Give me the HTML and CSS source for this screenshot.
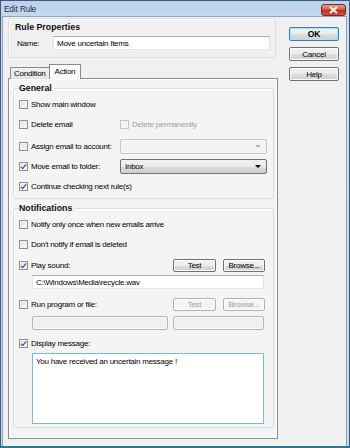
FILE: index.html
```html
<!DOCTYPE html>
<html lang="en">
<head>
    <meta charset="UTF-8">
    <title>Edit Rule</title>
    <link rel="stylesheet" href="styles.css">
</head>
<body>
    <div class="window">
        <div class="titlebar">
            <span class="title">Edit Rule</span>
            <span class="close-btn">
                <svg width="9" height="8" viewBox="0 0 9 8"><path d="M1 1 L8 7 M8 1 L1 7" stroke="#fff" stroke-width="1.8"/></svg>
            </span>
        </div>
        <div class="client">
            <div class="left">
                <div class="props">
                    <div class="props-title">Rule Properties</div>
                    <div class="name-row">
                        <span class="name-label">Name:</span>
                        <div class="textbox name-box">Move uncertain Items</div>
                    </div>
                </div>

                <div class="tabs">
                    <div class="tab">Condition</div>
                    <div class="tab active">Action</div>
                </div>

                <div class="panel">
                    <div class="group general">
                        <div class="legend">General</div>
                        <div class="row"><span class="check"></span><span class="label">Show main window</span></div>
                        <div class="row">
                            <span class="check"></span><span class="label col1">Delete email</span>
                            <span class="check disabled"></span><span class="label muted">Delete permanently</span>
                        </div>
                        <div class="row gap2">
                            <span class="check"></span><span class="label col1">Assign email to account:</span>
                            <div class="combo disabled"><span class="arrow"></span></div>
                        </div>
                        <div class="row">
                            <span class="check on"></span><span class="label col1">Move email to folder:</span>
                            <div class="combo">Inbox<span class="arrow"></span></div>
                        </div>
                        <div class="row"><span class="check on"></span><span class="label">Continue checking next rule(s)</span></div>
                    </div>

                    <div class="group notif">
                        <div class="legend">Notifications</div>
                        <div class="row"><span class="check"></span><span class="label">Notify only once when new emails arrive</span></div>
                        <div class="row"><span class="check"></span><span class="label">Don't notify if email is deleted</span></div>
                        <div class="row short">
                            <span class="check on"></span><span class="label grow">Play sound:</span>
                            <span class="btn small">Test</span><span class="btn small browse">Browse...</span>
                        </div>
                        <div class="textbox path">C:\Windows\Media\recycle.wav</div>
                        <div class="row short run">
                            <span class="check"></span><span class="label grow">Run program or file:</span>
                            <span class="btn small disabled">Test</span><span class="btn small browse disabled">Browse...</span>
                        </div>
                        <div class="split">
                            <div class="textbox disabled wide"></div>
                            <div class="textbox disabled narrow"></div>
                        </div>
                        <div class="row short display">
                            <span class="check on"></span><span class="label">Display message:</span>
                        </div>
                        <div class="textbox message">You have received an uncertain message !</div>
                    </div>
                </div>
            </div>

            <div class="buttons">
                <span class="btn big default">OK</span>
                <span class="btn big">Cancel</span>
                <span class="btn big">Help</span>
            </div>
        </div>
    </div>
</body>
</html>
```

FILE: styles.css
```css
* { box-sizing: border-box; }
html, body { margin: 0; padding: 0; }
body { font-family: "Liberation Sans", Arial, sans-serif; font-size: 8px; letter-spacing: -0.25px; color: #000; background: #fff; }

.window {
    width: 350px;
    height: 448px;
    display: flex;
    flex-direction: column;
    background: linear-gradient(#bcd1ec, #cfdff2 30px, #c4d8ee);
    border: 1px solid #3f5a78;
    border-bottom: 2px solid #1c7f96;
}
.titlebar { height: 15px; display: flex; align-items: center; justify-content: space-between; padding: 0 3px 0 3px; }
.title { font-size: 8.2px; letter-spacing: -0.1px; color: #1e2b3a; padding-top: 1px; }
.close-btn {
    width: 25px;
    height: 12px;
    margin-top: 2px;
    border: 1px solid #7a2a20;
    border-radius: 3px;
    background: linear-gradient(#e8a293, #d0513c 50%, #b9321f 51%, #c9543d);
    display: flex;
    align-items: center;
    justify-content: center;
}
.client {
    flex: 1;
    margin: 0 2px 0 1px;
    border: 1px solid #8da2bb;
    border-bottom: none;
    background: #f0f0f0;
    display: flex;
    padding: 1px 0 0 5px;
}

.left { width: 270px; }

.props {
    width: 268px;
    height: 40px;
    border: 1px solid #d5dfe5;
    border-radius: 3px;
    box-shadow: inset 1px 1px 0 #fff;
    padding: 3px 0 0 6px;
}
.props-title, .legend { font-weight: bold; font-size: 8.8px; letter-spacing: 0; line-height: 10px; color: #101010; }
.name-row { display: flex; align-items: center; margin-top: 4px; }
.name-label { width: 38px; padding-left: 2px; }

.textbox {
    height: 14px;
    background: #fff;
    border: 1px solid #abadb3;
    border-color: #abadb3 #dbdfe6 #e3e9ef #e2e3ea;
    padding: 2px 3px 0;
    line-height: 10px;
    white-space: nowrap;
}
.name-box { width: 217px; }

.tabs { display: flex; align-items: flex-end; height: 15px; margin-top: 5px; padding-left: 2px; position: relative; z-index: 1; }
.tab {
    height: 12px;
    padding: 0 3px;
    border: 1px solid #898c95;
    border-bottom: none;
    background: linear-gradient(#f2f2f2, #e3e3e3);
    line-height: 11px;
    margin-bottom: -1px;
}
.tab.active { height: 15px; background: #fcfcfe; margin-left: -1px; padding: 0 5px; line-height: 13px; }

.panel {
    height: 361px;
    border: 1px solid #898c95;
    background: #f4f4f4;
    box-shadow: inset 1px 1px 0 #fff, inset -1px -1px 0 #fff;
    padding: 9px 3px 0 4px;
}

.group {
    border: 1px solid #d5dfe5;
    border-radius: 3px;
    box-shadow: inset 1px 1px 0 #fff;
    padding: 0 5px;
}
.legend { display: inline-block; background: #f4f4f4; margin: -6px 0 0 0; padding-right: 2px; height: 11px; vertical-align: top; }
.general { height: 111px; }
.notif { height: 220px; margin-top: 9px; }

.row { display: flex; align-items: center; height: 20px; }
.row.gap2 { margin-top: 2px; }
.row.short { height: 18px; }
.general .legend + .row { margin-top: -4px; }
.notif .legend + .row { margin-top: -4px; }
.notif .row:nth-child(4) { margin-top: 2px; }
.row.run { margin-top: 6px; }
.row.display { margin-top: 4px; }

.check {
    width: 9px;
    height: 9px;
    flex: none;
    border: 1px solid #8e8f8f;
    background: linear-gradient(135deg, #dcdcdc, #fbfbfb);
    box-shadow: inset 0 0 0 1px #f4f4f4;
    position: relative;
    margin-right: 3px;
}
.check.on::after {
    content: "";
    position: absolute;
    left: 2px;
    top: 0px;
    width: 2px;
    height: 5px;
    border: solid #2a3d9a;
    border-width: 0 1.5px 1.5px 0;
    transform: rotate(40deg);
}
.check.disabled { border-color: #c4c4c4; background: #f4f4f4; }
.label { white-space: nowrap; }
.label.col1 { width: 89px; }
.label.grow { flex: 1; }
.muted { color: #a0a0a0; }

.combo {
    width: 147px;
    height: 15px;
    border: 1px solid #707070;
    border-radius: 2px;
    background: linear-gradient(#f2f2f2, #ebebeb 50%, #dddddd 51%, #cfcfcf);
    padding: 0 4px;
    line-height: 13px;
    position: relative;
}
.combo.disabled { background: #f4f4f4; border-color: #c8c8c8; }
.arrow {
    position: absolute;
    right: 5px;
    top: 5px;
    border-left: 3px solid transparent;
    border-right: 3px solid transparent;
    border-top: 3px solid #000;
}
.combo.disabled .arrow { border-top-color: #b0b0b0; }

.btn {
    display: flex;
    align-items: center;
    justify-content: center;
    border: 1px solid #707070;
    border-radius: 2px;
    background: linear-gradient(#f2f2f2, #ebebeb 50%, #dddddd 51%, #cfcfcf);
    box-shadow: inset 0 0 0 1px #fcfcfc;
}
.btn.small { height: 13px; width: 43px; margin-right: 7px; }
.btn.small.browse { width: 42px; margin-right: 3px; }
.btn.disabled { color: #a0a0a0; border-color: #adb2b5; background: #f4f4f4; }

.path { width: 232px; margin: 1px 0 0 13px; }
.split { display: flex; margin: 3px 0 0 13px; gap: 5px; }
.textbox.disabled { background: #f0f0f0; border: 1px solid #b5b5b5; border-radius: 2px; box-shadow: inset 0 0 0 1px #fafafa; }
.wide { width: 136px; }
.narrow { width: 91px; }
.message { width: 232px; height: 71px; margin: 1px 0 0 13px; border: 1px solid #7eb4ea; padding-top: 3px; }

.buttons { display: flex; flex-direction: column; gap: 6px; margin: 9px 0 0 11px; }
.btn.big { width: 50px; height: 14px; font-size: 8px; }
.btn.default { border-color: #3c7fb1; box-shadow: inset 0 0 0 1px #a8e3f7; font-weight: bold; font-size: 8.5px; letter-spacing: 0; }
```
